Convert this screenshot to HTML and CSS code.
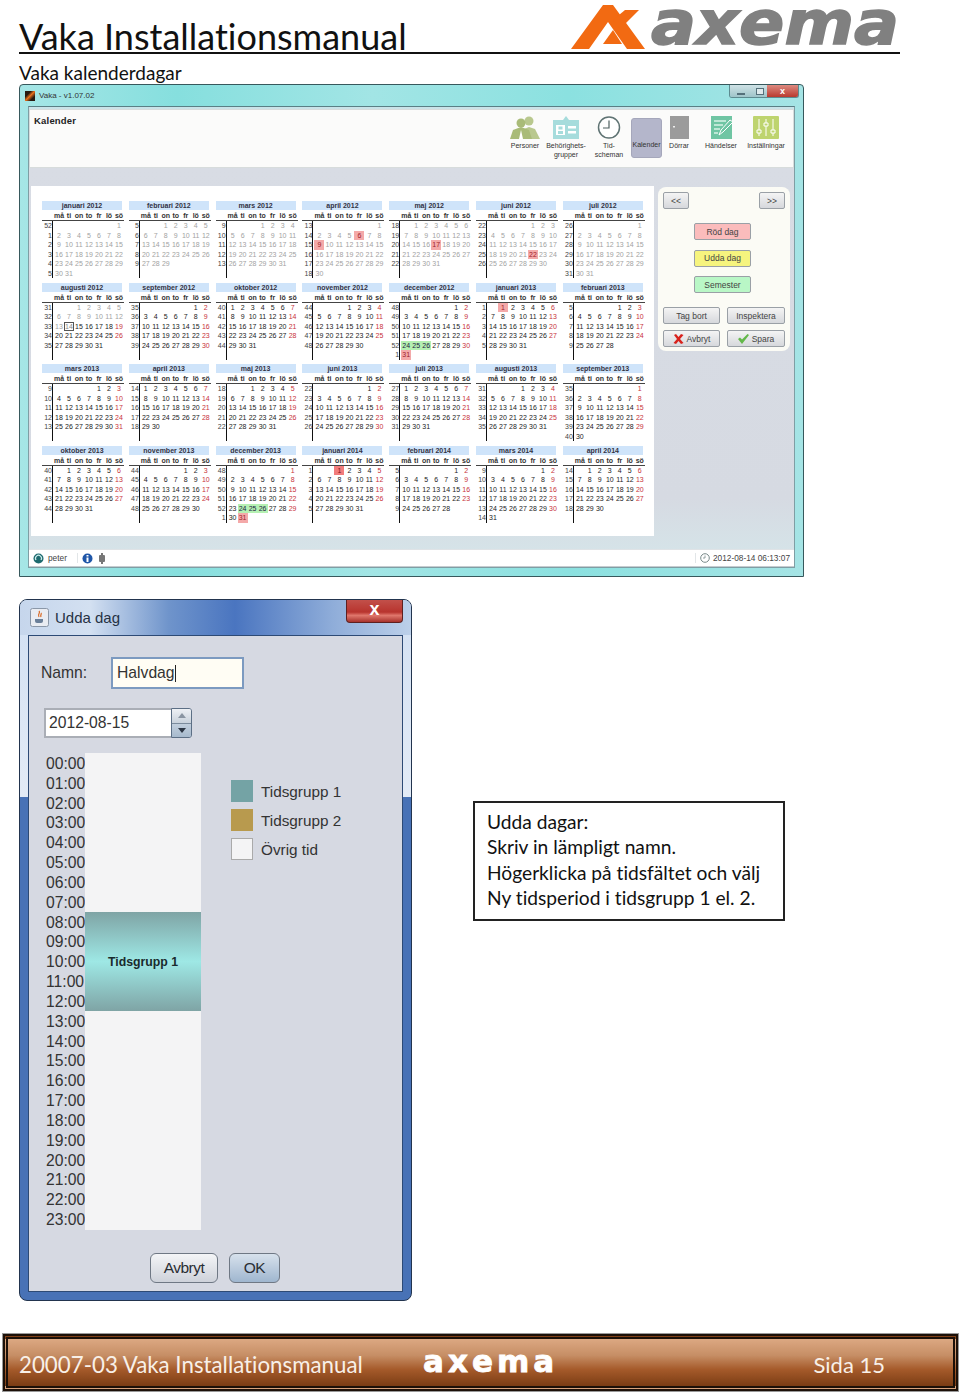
FILE: index.html
```html
<!DOCTYPE html>
<html lang="sv">
<head>
  <meta charset="UTF-8">
  <meta name="viewport" content="width=device-width, initial-scale=1.0">
  <title>Vaka Installationsmanual</title>
  <link rel="stylesheet" href="styles.css">
</head>
<body>
  <div class="page">
    <div class="doc-header">
      <h1>Vaka Installationsmanual</h1>
      <svg class="logo" width="330" height="50" viewBox="0 0 330 50">
        <polygon fill="#f26a12" points="1,49 33,5 43,5 75,49 57,49 38,22 19,49"/>
        <polygon fill="#f26a12" points="33,44 43,30 52,44"/>
        <polygon fill="#f26a12" points="55,10 69,10 50,29 43,20"/>
        <text x="81" y="43.500" class="logo-text" textLength="248" lengthAdjust="spacingAndGlyphs">axema</text>
      </svg>
    </div>
    <h2 class="doc-sub">Vaka kalenderdagar</h2>

    <div class="app-window">
      <div class="app-titlebar">
        <span class="app-icon"></span>
        <span class="app-title">Vaka - v1.07.02</span>
        <div class="win-controls">
          <span class="win-btn"><i class="win-min"></i></span>
          <span class="win-btn win-btn-max"><i class="win-max"></i></span>
          <span class="win-btn win-close">x</span>
        </div>
      </div>
      <div class="app-frame">
        <div class="toolbar">
          <div class="toolbar-title">Kalender</div>
          <div class="tools">
            <div class="tool tool-people">
              <svg width="30" height="23" viewBox="0 0 30 23"><circle cx="19" cy="5" r="4.500" fill="#b9c88e"/><path d="M12 23l2-10 5-2 6 2 5 10z" fill="#b9c88e"/><circle cx="11" cy="7" r="4.500" fill="#a9bb78"/><path d="M0 23l3-9 8-3 8 3 3 9z" fill="#a9bb78"/><path d="M11 14l-2 9h4z" fill="#fff"/></svg>
              <span>Personer</span>
            </div>
            <div class="tool tool-group">
              <svg width="26" height="23" viewBox="0 0 26 23"><path d="M10 4l3-4 3 4h10v19H0V4z" fill="#a6dcdc"/><rect x="3" y="9" width="9" height="10" fill="#fff"/><rect x="5.500" y="10.500" width="4" height="3" fill="#a6dcdc"/><rect x="5" y="15" width="5" height="3" fill="#a6dcdc"/><rect x="15" y="10" width="8" height="2.500" fill="#fff"/><rect x="15" y="15" width="8" height="2.500" fill="#fff"/></svg>
              <span>Behörighets-<br>grupper</span>
            </div>
            <div class="tool tool-clock">
              <svg width="24" height="23" viewBox="0 0 24 23"><circle cx="12" cy="11.500" r="10.500" fill="#fff" stroke="#5f7373" stroke-width="1.500"/><path d="M12 4.500v7.500H6" fill="none" stroke="#4f6060" stroke-width="1.200"/></svg>
              <span>Tid-<br>scheman</span>
            </div>
            <div class="tool tool-active">
              <span>Kalender</span>
            </div>
            <div class="tool tool-door">
              <svg width="19" height="23" viewBox="0 0 19 23"><rect width="19" height="23" fill="#9b9b9b"/><rect x="3" y="10" width="2" height="1.500" fill="#eee"/></svg>
              <span>Dörrar</span>
            </div>
            <div class="tool tool-wide">
              <svg width="21" height="23" viewBox="0 0 21 23"><rect width="21" height="23" fill="#6fc5a3"/><path d="M3 5h12M3 9h9M3 13h6M3 17h4" stroke="#d8f2e6" stroke-width="1.500"/><path d="M8 19l2-5L19 4l3 2-10 10z" fill="#6fc5a3" stroke="#fff"/></svg>
              <span>Händelser</span>
            </div>
            <div class="tool">
              <svg width="26" height="23" viewBox="0 0 26 23"><rect width="26" height="23" rx="1" fill="#bed46f"/><path d="M6 3v17M13 3v17M20 3v17" stroke="#fff"/><path d="M4 14h4v3H4zM11 7h4v3h-4zM18 14h4v3h-4z" fill="#bed46f" stroke="#fff"/></svg>
              <span>Inställningar</span>
            </div>
          </div>
        </div>

        <div class="work-area">
          <div class="calendar-panel" id="calendar-grid"></div>
          <div class="side-panel">
            <div class="side-row">
              <button class="sw-btn sw-nav">&lt;&lt;</button>
              <button class="sw-btn sw-nav">&gt;&gt;</button>
            </div>
            <div class="day-types">
              <button class="sw-btn day-red">Röd dag</button>
              <button class="sw-btn day-yellow">Udda dag</button>
              <button class="sw-btn day-green">Semester</button>
            </div>
            <div class="side-actions">
              <button class="sw-btn">Tag bort</button>
              <button class="sw-btn">Inspektera</button>
              <button class="sw-btn">
                <svg width="11" height="10" viewBox="0 0 11 10"><path d="M1 1l2-1 2.500 3L8 0l2.500 1L7 5l3.500 4L8 10 5.500 7 3 10 .5 9 4 5z" fill="#d8221c"/></svg>
                Avbryt
              </button>
              <button class="sw-btn">
                <svg width="11" height="10" viewBox="0 0 11 10"><path d="M0 5l2-1.500 2 2L9.500 0 11 1 4 10z" fill="#63b84a"/></svg>
                Spara
              </button>
            </div>
          </div>
        </div>

        <div class="status-bar">
          <svg width="11" height="11" viewBox="0 0 11 11"><circle cx="5.500" cy="5.500" r="5" fill="#1d6a6e"/><path d="M3 7a3 3 0 1 1 5 0" fill="none" stroke="#cfeeee" stroke-width="1.200"/></svg>
          <span class="status-user">peter</span>
          <svg width="11" height="11" viewBox="0 0 11 11"><circle cx="5.500" cy="5.500" r="5" fill="#1f56a8"/><rect x="4.500" y="4.500" width="2" height="4.500" fill="#fff"/><rect x="4.500" y="2" width="2" height="1.500" fill="#fff"/></svg>
          <svg class="status-plug" width="6" height="11" viewBox="0 0 6 11"><rect x="0" y="2" width="6" height="7" rx="1" fill="#777"/><rect x="2" y="0" width="2" height="11" fill="#777"/></svg>
          <span class="status-time">
            <svg width="10" height="10" viewBox="0 0 10 10"><circle cx="5" cy="5" r="4.300" fill="#fff" stroke="#7a8a8a"/><path d="M5 2.500V5H3" fill="none" stroke="#7a8a8a" stroke-width=".8"/></svg>
            2012-08-14 06:13:07
          </span>
        </div>
      </div>
    </div>

    <div class="lower">
      <div class="dialog">
        <div class="dialog-titlebar">
          <svg class="java-icon" width="19" height="19" viewBox="0 0 19 19"><rect x=".5" y=".5" width="18" height="18" rx="2" fill="#e9ecf2" stroke="#8a97a8"/><path d="M5 11h8v2a2 2 0 0 1-2 2H7a2 2 0 0 1-2-2z" fill="#6a7f99"/><path d="M9 3c2 2-2 3 0 6M11 5c1 1-1 2 0 4" fill="none" stroke="#d9661f" stroke-width="1.200"/></svg>
          <span class="dialog-title">Udda dag</span>
          <span class="dialog-close">x</span>
        </div>
        <div class="dialog-body">
          <div class="name-row">
            <label class="name-label">Namn:</label>
            <div class="name-input">Halvdag<i class="caret"></i></div>
          </div>
          <div class="date-spinner">
            <div class="date-value">2012-08-15</div>
            <div class="spin-btns">
              <span class="spin-up"><i></i></span>
              <span class="spin-down"><i></i></span>
            </div>
          </div>
          <div class="schedule">
            <div class="hours">
              <span>00:00</span><span>01:00</span><span>02:00</span><span>03:00</span>
              <span>04:00</span><span>05:00</span><span>06:00</span><span>07:00</span>
              <span>08:00</span><span>09:00</span><span>10:00</span><span>11:00</span>
              <span>12:00</span><span>13:00</span><span>14:00</span><span>15:00</span>
              <span>16:00</span><span>17:00</span><span>18:00</span><span>19:00</span>
              <span>20:00</span><span>21:00</span><span>22:00</span><span>23:00</span>
            </div>
            <div class="day-bar">
              <div class="period">Tidsgrupp 1</div>
            </div>
            <div class="legend">
              <div class="legend-item"><i class="swatch swatch-1"></i>Tidsgrupp 1</div>
              <div class="legend-item"><i class="swatch swatch-2"></i>Tidsgrupp 2</div>
              <div class="legend-item"><i class="swatch swatch-3"></i>Övrig tid</div>
            </div>
          </div>
          <div class="dialog-buttons">
            <button class="dlg-btn dlg-cancel">Avbryt</button>
            <button class="dlg-btn dlg-ok">OK</button>
          </div>
        </div>
      </div>
      <div class="note">
        Udda dagar:<br>
        Skriv in lämpligt namn.<br>
        Högerklicka på tidsfältet och välj<br>
        Ny tidsperiod i tidsgrupp 1 el. 2.
      </div>
    </div>

    <div class="doc-footer">
      <span class="footer-doc">20007-03 Vaka Installationsmanual</span>
      <span class="footer-logo">axema</span>
      <span class="footer-page">Sida 15</span>
    </div>
  </div>
  <script src="script.js"></script>
</body>
</html>
```

FILE: styles.css
```css
body {
  margin: 0;
  background-color: #fff;
  font-family: 'Liberation Sans', Arial, sans-serif;
  font-variant-ligatures: none;
}
.page {
  height: 1392px;
  overflow: hidden;
  display: flex;
  flex-direction: column;
}

/* document header */
.doc-header {
  width: 881px;
  height: 52px;
  margin-left: 19px;
  border-bottom: 2px solid #111;
  display: flex;
  justify-content: space-between;
  align-items: flex-end;
}
.doc-header h1 {
  margin: 0;
  font-family: 'Lato', sans-serif;
  font-size: 36px;
  font-weight: 400;
  line-height: 32px;
  color: #111;
}
.logo {
  margin-bottom: 2px;
  overflow: visible;
}
.logo-text {
  font-family: 'DejaVu Sans', sans-serif;
  font-size: 60px;
  font-weight: 700;
  font-style: oblique;
  fill: #808080;
  stroke: #808080;
  stroke-width: 1.500px;
}
.doc-sub {
  margin: 7px 0 0 19px;
  font-family: 'Lato', sans-serif;
  font-size: 19px;
  font-weight: 400;
  line-height: 23px;
  color: #111;
}

/* vaka main window */
.app-window {
  width: 783px;
  height: 491px;
  margin: 0 0 0 19px;
  border: 1px solid #37585c;
  border-radius: 4px 4px 0 0;
  background: linear-gradient(90deg, #a6e6e6, #86dfde 20%, #a2e5e5 45%, #8be1e0 70%, #a5e4e5);
  display: flex;
  flex-direction: column;
  flex-shrink: 0;
}
.app-titlebar {
  height: 21px;
  display: flex;
  align-items: center;
  padding-left: 5px;
  flex-shrink: 0;
}
.app-icon {
  width: 10px;
  height: 10px;
  background: linear-gradient(135deg, #2a1a10 30%, #e8711c 50%, #2a1a10 75%);
}
.app-title {
  margin-left: 4px;
  font-size: 8px;
  color: #333;
}
.win-controls {
  margin-left: auto;
  margin-right: 4px;
  margin-top: -8px;
  display: flex;
  border: 1px solid #5d8a8f;
  border-top: 0;
  border-radius: 0 0 3px 3px;
  overflow: hidden;
}
.win-btn {
  width: 22px;
  height: 12px;
  background: linear-gradient(#cfe2e6, #9fc4c9);
  display: flex;
  align-items: center;
  justify-content: center;
}
.win-btn-max {
  width: 15px;
}
.win-close {
  width: 31px;
  background: linear-gradient(#dd8a80, #b93a2f);
  color: #fff;
  font-size: 9px;
  font-weight: 700;
}
.win-min {
  width: 8px;
  height: 2px;
  margin-top: 5px;
  background: #eef;
  border: 1px solid #55707a;
  box-sizing: border-box;
}
.win-max {
  width: 8px;
  height: 7px;
  border: 1px solid #55707a;
  box-sizing: border-box;
  background: #dfeaec;
}
.app-frame {
  flex: 1;
  margin: 0 8px 8px;
  display: flex;
  flex-direction: column;
  background: linear-gradient(#c9e3e8, #d8dce4 12%, #d6dae2 85%, #d5e6ea);
  border: 1px solid #7f9ea4;
  border-top-color: #5a7f85;
  min-height: 0;
}
.toolbar {
  height: 59px;
  margin: 2px 0 0;
  background: #fbfbfa;
  border: 1px solid #d7dcdc;
  display: flex;
  justify-content: space-between;
  flex-shrink: 0;
  box-sizing: border-box;
}
.toolbar-title {
  margin: 5px 0 0 4px;
  font-size: 9.500px;
  font-weight: 700;
  letter-spacing: .2px;
  color: #222;
}
.tools {
  display: flex;
  padding-right: 6px;
}
.tool {
  width: 42px;
  padding-top: 6px;
  display: flex;
  flex-direction: column;
  align-items: center;
  text-align: center;
  font-size: 7px;
  line-height: 9px;
  color: #333;
}
.tool svg {
  margin-bottom: 2px;
  flex-shrink: 0;
}
.tool-people {
  width: 34px;
}
.tool-group {
  width: 48px;
}
.tool-clock {
  width: 38px;
}
.tool-active {
  width: 31px;
  height: 40px;
  margin: 8px -1px 0 3px;
  padding-top: 21px;
  box-sizing: border-box;
  background: #b4b6cb;
  border-radius: 3px;
  border: 1px solid #a5a7bb;
}
.tool-door {
  width: 36px;
}
.tool-wide {
  width: 48px;
}

.work-area {
  flex: 1;
  display: flex;
  align-items: flex-start;
  padding: 18px 0 0 2px;
  min-height: 0;
}
.calendar-panel {
  width: 612px;
  height: 335px;
  padding: 15px 0 0 11px;
  background: #fff;
  display: grid;
  grid-template-columns: repeat(7, 80px);
  grid-auto-rows: 81.600px;
  column-gap: 6.800px;
  font-size: 7px;
  color: #222;
  overflow: hidden;
}
.month-title {
  width: 80px;
  height: 9px;
  line-height: 9px;
  background: #cfe4fa;
  text-align: center;
  font-weight: 700;
  color: #334;
}
.weekdays {
  display: grid;
  grid-template-columns: repeat(7, 10px);
  padding-left: 12px;
  height: 9px;
  line-height: 9px;
  margin-top: 1px;
  width: 70px;
  border-bottom: 1px solid #444;
  text-align: center;
  font-weight: 700;
  color: #333;
}
.month-body {
  display: flex;
  height: 57px;
}
.week-col {
  width: 10px;
  margin-right: 1px;
  border-right: 1px solid #111;
  flex-shrink: 0;
  text-align: right;
}
.week-col span {
  display: block;
  height: 9.500px;
  line-height: 9.500px;
  color: #444;
}
.days {
  display: grid;
  grid-template-columns: repeat(7, 10px);
  grid-auto-rows: 9.500px;
  line-height: 9.500px;
  text-align: center;
}
.days .past { color: #a2a2a2; }
.days .sunday { color: #c8323a; }
.days .today {
  color: #888;
  outline: 1px solid #555;
  outline-offset: -1px;
}
.days .red-day { background: #f4a9a9; color: #a0222a; }
.days .odd-day { background: #b5f0b2; color: #224; }
.days .new-year { background: #f27c7c; color: #7a1a1a; }

/* right side buttons */
.side-panel {
  width: 122px;
  height: 154px;
  margin: 1px 0 0 4px;
  padding: 5px;
  background: #fbfbf5;
  border-radius: 8px;
  display: flex;
  flex-direction: column;
}
.side-row {
  display: flex;
  justify-content: space-between;
}
.sw-btn {
  height: 17px;
  padding: 0;
  border: 1px solid #9aa0a6;
  border-radius: 2px;
  background: linear-gradient(#f4f4f4, #d6d8dc);
  font-family: 'Liberation Sans', Arial, sans-serif;
  font-size: 8.500px;
  color: #444;
  display: flex;
  align-items: center;
  justify-content: center;
  gap: 3px;
}
.sw-nav {
  width: 26px;
}
.day-types {
  margin-top: 14px;
  padding-right: 3px;
  display: flex;
  flex-direction: column;
  align-items: center;
  gap: 9.500px;
}
.day-types .sw-btn {
  width: 57px;
}
.day-red { background: #fbbcbc; }
.day-yellow { background: #f6f47e; }
.day-green { background: #b9f7c6; }
.side-actions {
  margin-top: 14px;
  display: grid;
  grid-template-columns: 57px 58px;
  column-gap: 7px;
  row-gap: 6px;
}

.status-bar {
  height: 16px;
  margin: 14px 0 0;
  background: #fff;
  border-top: 1px solid #dfe3e6;
  border-bottom: 1px solid #c5ccd0;
  display: flex;
  align-items: center;
  gap: 4px;
  padding: 0 4px;
  font-size: 8.300px;
  color: #444;
  flex-shrink: 0;
}
.status-user {
  width: 29px;
  border-right: 1px solid #e2e6e8;
}
.status-plug {
  margin-left: 2px;
}
.status-time {
  margin-left: auto;
  display: flex;
  align-items: center;
  gap: 3px;
  border-left: 1px solid #e2e6e8;
  padding-left: 4px;
}

/* lower part of page */
.lower {
  display: flex;
  align-items: flex-start;
  margin: 22px 0 0 19px;
}
.dialog {
  width: 391px;
  height: 700px;
  border: 1px solid #22344e;
  border-radius: 8px;
  background: linear-gradient(#d2e0f3 0, #e3ebf6 197px, #4872b6 197px, #4872b6 100%);
  display: flex;
  flex-direction: column;
  flex-shrink: 0;
  overflow: hidden;
}
.dialog-titlebar {
  height: 35px;
  display: flex;
  align-items: center;
  padding-left: 10px;
  background: linear-gradient(90deg, #c6d6ec, #d3e0f1 18%, #6f94cb 38%, #4a75c0 55%, #8fadd9 80%, #bcd0ea);
  flex-shrink: 0;
}
.dialog-title {
  margin-left: 6px;
  font-size: 15px;
  color: #263244;
}
.dialog-close {
  margin: -12px 8px 0 auto;
  width: 57px;
  height: 23px;
  background: linear-gradient(#c2504a, #b8342e 55%, #e0776c 70%, #a8322c);
  border: 1px solid #5e2020;
  border-top: 0;
  border-radius: 0 0 4px 4px;
  box-sizing: border-box;
  color: #fff;
  font-size: 18px;
  font-weight: 700;
  line-height: 18px;
  text-align: center;
}
.dialog-body {
  flex: 1;
  margin: 0 8px 8px;
  background: #d6d9e2;
  border: 1px solid #2d4a75;
  min-height: 0;
  color: #333;
  font-size: 15.700px;
}
.name-row {
  margin: 21px 0 0 12px;
  display: flex;
  align-items: center;
}
.name-label {
  width: 70px;
}
.name-input {
  width: 125px;
  height: 28px;
  border: 2px solid #7c9ac0;
  background: #fffdf4;
  padding-left: 4px;
  line-height: 28px;
}
.caret {
  display: inline-block;
  width: 1px;
  height: 17px;
  background: #222;
  vertical-align: -4px;
}
.date-spinner {
  margin: 19px 0 0 15px;
  display: flex;
  width: 148px;
  height: 30px;
}
.date-value {
  flex: 1;
  background: #fff;
  border: 2px solid #aaaeb6;
  border-right: 0;
  padding-left: 3px;
  line-height: 26px;
}
.spin-btns {
  width: 21px;
  display: flex;
  flex-direction: column;
  border: 1px solid #5c6f85;
  border-radius: 0 3px 3px 0;
  overflow: hidden;
  box-sizing: border-box;
}
.spin-btns span {
  flex: 1;
  display: flex;
  align-items: center;
  justify-content: center;
}
.spin-up {
  background: linear-gradient(#eef1f5, #c9d2dc);
  border-bottom: 1px solid #7b8b9c;
}
.spin-down {
  background: linear-gradient(#c2cfdd, #a7bacd);
}
.spin-up i, .spin-down i {
  width: 0;
  height: 0;
  border-left: 4px solid transparent;
  border-right: 4px solid transparent;
}
.spin-up i { border-bottom: 5px solid #8a95a2; }
.spin-down i { border-top: 5px solid #2c3644; }
.schedule {
  margin: 15px 0 0 17px;
  display: flex;
  align-items: flex-start;
}
.hours {
  width: 39px;
  height: 476px;
  padding-top: 1px;
  display: grid;
  grid-template-rows: repeat(24, 1fr);
  align-items: center;
}
.day-bar {
  width: 116px;
  height: 477px;
  background: #f4f4f5;
  display: grid;
  grid-template-rows: repeat(24, 1fr);
}
.period {
  grid-row: 9 / span 5;
  background: linear-gradient(#7fa4a5, #9ee8e5 50%, #7fa4a5);
  display: flex;
  align-items: center;
  justify-content: center;
  font-size: 12.300px;
  font-weight: 700;
  color: #1a2a2c;
}
.legend {
  margin: 23px 0 0 30px;
  display: flex;
  flex-direction: column;
  font-size: 15.300px;
}
.legend-item {
  display: flex;
  align-items: center;
  gap: 8px;
  height: 26px;
  padding-top: 3px;
}
.swatch {
  width: 22px;
  height: 22px;
  margin-top: -3px;
}
.swatch-1 { background: #74a3a5; }
.swatch-2 { background: #b89a4e; }
.swatch-3 { background: #f4f4f5; border: 1px solid #aaa; box-sizing: border-box; }
.dialog-buttons {
  margin: 23px 0 0 121px;
  display: flex;
  gap: 11px;
}
.dlg-btn {
  height: 30px;
  padding: 0;
  border: 1px solid #6f7884;
  border-radius: 6px;
  font-family: 'Liberation Sans', Arial, sans-serif;
  font-size: 15.500px;
  letter-spacing: -.5px;
  color: #2a2e34;
}
.dlg-cancel {
  width: 68px;
  background: linear-gradient(#f4f5f7, #ced2da);
}
.dlg-ok {
  width: 51px;
  background: linear-gradient(#d7e1ec, #9fb6cf);
}
.note {
  width: 296px;
  height: 110px;
  margin: 202px 0 0 61px;
  padding: 6px 0 0 12px;
  border: 2px solid #222;
  font-family: 'Lato', sans-serif;
  font-size: 19.200px;
  line-height: 25.300px;
  color: #111;
  flex-shrink: 0;
}

/* footer */
.doc-footer {
  margin: auto 2px 1px 3px;
  height: 47px;
  border: 5px double #1c1008;
  box-shadow: 0 0 0 1px #999;
  background: linear-gradient(#dca882, #c68e65 35%, #a55a2a 65%, #7a3c14);
  display: flex;
  align-items: center;
  color: #fff;
  flex-shrink: 0;
}
.footer-doc {
  margin: 3px 0 0 11px;
  width: 343px;
  white-space: nowrap;
  font-family: 'Lato', sans-serif;
  font-size: 22.300px;
  color: #f8f0e8;
}
.footer-logo {
  margin: -2px 0 0 61px;
  font-family: 'DejaVu Sans', sans-serif;
  font-size: 31px;
  font-weight: 700;
  letter-spacing: 4px;
  line-height: 1;
  -webkit-text-stroke: .8px #fff;
}
.footer-page {
  margin: 3px 68px 0 auto;
  font-family: 'Lato', sans-serif;
  font-size: 22px;
  color: #f8f0e8;
}
```

FILE: script.js
```js
const monthNames = ['januari', 'februari', 'mars', 'april', 'maj', 'juni', 'juli',
  'augusti', 'september', 'oktober', 'november', 'december'];
const dayNames = ['må', 'ti', 'on', 'to', 'fr', 'lö', 'sö'];

const redDays = ['2012-4-6', '2012-4-9', '2012-5-17', '2012-6-22', '2012-12-31',
  '2013-1-1', '2013-12-31'];
const oddDays = ['2012-12-24', '2012-12-25', '2012-12-26',
  '2013-12-24', '2013-12-25', '2013-12-26'];

function weekNumber(date) {
  const d = new Date(Date.UTC(date.getFullYear(), date.getMonth(), date.getDate()));
  d.setUTCDate(d.getUTCDate() + 4 - (d.getUTCDay() || 7));
  const yearStart = new Date(Date.UTC(d.getUTCFullYear(), 0, 1));
  return Math.ceil(((d - yearStart) / 86400000 + 1) / 7);
}

function dayClass(year, month, day, weekday) {
  const key = `${year}-${month + 1}-${day}`;
  if (key === '2014-1-1') return 'new-year';
  if (redDays.includes(key)) return 'red-day';
  if (oddDays.includes(key)) return 'odd-day';
  if (key === '2012-8-14') return 'today';
  const isPast = new Date(year, month, day) < new Date(2012, 7, 14);
  if (isPast) return 'past';
  return weekday === 6 ? 'sunday' : '';
}

function buildMonth(year, month) {
  const first = new Date(year, month, 1);
  const dayCount = new Date(year, month + 1, 0).getDate();
  const offset = (first.getDay() + 6) % 7;

  let days = '<span></span>'.repeat(offset);
  let weeks = '';
  for (let day = 1; day <= dayCount; day++) {
    const weekday = (offset + day - 1) % 7;
    if (day === 1 || weekday === 0) {
      weeks += `<span>${weekNumber(new Date(year, month, day))}</span>`;
    }
    days += `<span class="${dayClass(year, month, day, weekday)}">${day}</span>`;
  }

  return `<div class="month">
    <div class="month-title">${monthNames[month]} ${year}</div>
    <div class="weekdays">${dayNames.map((n) => `<span>${n}</span>`).join('')}</div>
    <div class="month-body">
      <div class="week-col">${weeks}</div>
      <div class="days">${days}</div>
    </div>
  </div>`;
}

const grid = document.getElementById('calendar-grid');
let html = '';
for (let i = 0; i < 28; i++) {
  html += buildMonth(2012 + Math.floor(i / 12), i % 12);
}
grid.innerHTML = html;
```
